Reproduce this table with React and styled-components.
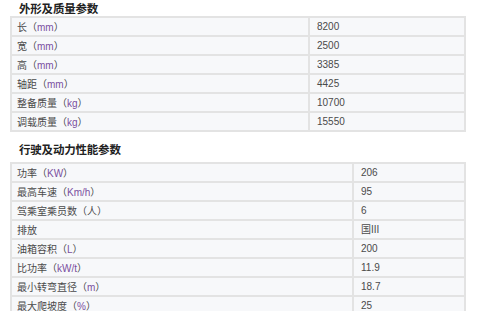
import styled, { createGlobalStyle } from 'styled-components'

const GlobalStyle = createGlobalStyle`
  html, body {
    margin: 0;
    padding: 0;
    background: #ffffff;
  }
`;

const sections = [
  {
    title: '外形及质量参数',
    split: 298,
    gap: 0,
    rows: [
      ['长', 'mm', '8200'],
      ['宽', 'mm', '2500'],
      ['高', 'mm', '3385'],
      ['轴距', 'mm', '4425'],
      ['整备质量', 'kg', '10700'],
      ['调载质量', 'kg', '15550'],
    ],
  },
  {
    title: '行驶及动力性能参数',
    split: 342,
    gap: 5,
    rows: [
      ['功率', 'KW', '206'],
      ['最高车速', 'Km/h', '95'],
      ['驾乘室乘员数', '人', '6'],
      ['排放', null, '国III'],
      ['油箱容积', 'L', '200'],
      ['比功率', 'kW/t', '11.9'],
      ['最小转弯直径', 'm', '18.7'],
      ['最大爬坡度', '%', '25'],
    ],
  },
];

function App() {
  return (
    <>
      <GlobalStyle />
      <Page>
        {sections.map((s) => (
          <Section key={s.title}>
            <Title $gap={s.gap}>{s.title}</Title>
            <Table>
              <colgroup>
                <col style={{ width: s.split }} />
                <col />
              </colgroup>
              <tbody>
                {s.rows.map(([label, unit, value]) => (
                  <tr key={label}>
                    <Cell>
                      {label}
                      {unit && (
                        <>
                          （<Unit $cjk={unit === '人'}>{unit}</Unit>）
                        </>
                      )}
                    </Cell>
                    <Cell $value>{value}</Cell>
                  </tr>
                ))}
              </tbody>
            </Table>
          </Section>
        ))}
      </Page>
    </>
  )
}

export default App

const Page = styled.div`
  width: 480px;
  height: 311px;
  overflow: hidden;
  background: #fff;
  font-family: "Liberation Sans", "Noto Sans CJK SC", sans-serif;
`;

const Section = styled.section`
  padding: 0 14px 0 10px;
  & + & {
    margin-top: 9px;
  }
`;

const Title = styled.h2`
  margin: 0 0 ${(p) => p.$gap}px;
  padding: 1px 0 0 9px;
  height: 15px;
  line-height: 15px;
  font-family: "Noto Sans CJK SC", sans-serif;
  font-size: 11.5px;
  font-weight: 700;
  color: #222;
  letter-spacing: -0.2px;
`;

const Table = styled.table`
  width: 456px;
  border-collapse: collapse;
  table-layout: fixed;
  background: #f7f8fa;
`;

const Cell = styled.td`
  box-sizing: border-box;
  height: 19px;
  padding: 1px 0 0 ${(p) => (p.$value ? 7 : 5)}px;
  border: 2px solid #e3e3e3;
  font-size: 10px;
  line-height: 14px;
  color: #4a4a4a;
  white-space: nowrap;
  font-family: ${(p) =>
    p.$value ? '"Liberation Sans", "Noto Sans CJK SC", sans-serif' : '"Noto Sans CJK SC", sans-serif'};
`;

const Unit = styled.span`
  color: ${(p) => (p.$cjk ? '#4a4a4a' : '#7a4fa0')};
  font-family: "Liberation Sans", "Noto Sans CJK SC", sans-serif;
`;
